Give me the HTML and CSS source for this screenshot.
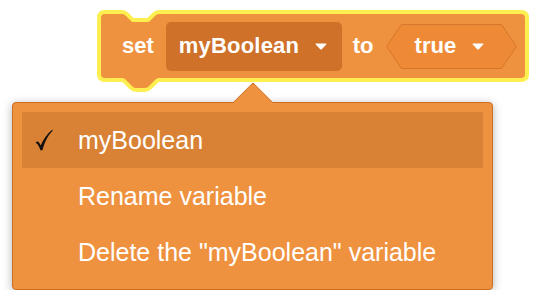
FILE: index.html
```html
<!DOCTYPE html>
<html>
<head>
<meta charset="utf-8">
<link rel="stylesheet" href="styles.css">
</head>
<body>
<div class="page">
  <div class="block">
    <svg class="block-shape" width="424" height="64" viewBox="0 0 424 64">
      <path d="M0 4 Q0 0 4 0 L21 0 C23 0 24 1 25 2 L30 7 C31 8 32 8 34 8 L45 8 C47 8 48 8 49 7 L54 2 C55 1 56 0 58 0 L420 0 Q424 0 424 4 L424 60 Q424 64 420 64 L58 64 C56 64 55 65 54 66 L48 72 C47 73 46 74 44 74 L35 74 C33 74 32 73 31 72 L25 66 C24 65 23 64 21 64 L4 64 Q0 64 0 60 Z" fill="#EF923F" stroke="#FDEF4F" stroke-width="8" stroke-linejoin="round" paint-order="stroke"/>
    </svg>
    <span class="label">set</span>
    <div class="pill">
      <span class="pill-text">myBoolean</span>
      <svg class="caret" width="12" height="7" viewBox="0 0 12 7"><path d="M1.2 0.5 L10.8 0.5 Q12 0.5 11.2 1.5 L6.8 6.2 Q6 7 5.2 6.2 L0.8 1.5 Q0 0.5 1.2 0.5 Z" fill="#fff"/></svg>
    </div>
    <span class="label to">to</span>
    <div class="hex">
      <svg class="hex-shape" width="131" height="45" viewBox="0 0 131 45"><polygon points="0.6,22.5 15.5,0.5 115.5,0.5 130.4,22.5 115.5,44.5 15.5,44.5" fill="#EE8A36" stroke="#D5772B" stroke-width="1"/></svg>
      <span class="hex-text">true</span>
      <svg class="caret" width="14" height="7" viewBox="0 0 12 7"><path d="M1.2 0.5 L10.8 0.5 Q12 0.5 11.2 1.5 L6.8 6.2 Q6 7 5.2 6.2 L0.8 1.5 Q0 0.5 1.2 0.5 Z" fill="#fff"/></svg>
    </div>
  </div>

  <div class="menu">
    <div class="arrow"></div>
    <div class="item selected">
      <span class="check"><svg width="18" height="22" viewBox="0 0 18 22"><path d="M0.8 13.2 C2.6 11.8 4.2 12.8 5.6 16.4 C8.6 9.8 12.6 4.4 17.2 0.8 L17.8 1.6 C13.6 5.8 10.2 11.6 7.4 21.2 L5.4 21.2 C4.4 17.8 3 15 0.8 13.8 Z" fill="#111"/></svg></span>
      <span>myBoolean</span>
    </div>
    <div class="item"><span class="check"></span><span>Rename variable</span></div>
    <div class="item"><span class="check"></span><span>Delete the "myBoolean" variable</span></div>
  </div>
</div>
</body>
</html>
```

FILE: styles.css
```css
html, body {
  margin: 0;
  padding: 0;
  background: #ffffff;
}

.page {
  padding-top: 14px;
  font-family: "Liberation Sans", Arial, sans-serif;
}

.block {
  position: relative;
  margin-left: 101px;
  width: 424px;
  height: 64px;
  box-sizing: border-box;
  padding-left: 21px;
  display: flex;
  align-items: center;
  gap: 12px;
}

.block-shape {
  position: absolute;
  left: 0;
  top: 0;
  overflow: visible;
}

.label {
  position: relative;
  color: #ffffff;
  font-weight: bold;
  font-size: 22px;
}

.label.to {
  margin-left: -1px;
}

.pill {
  position: relative;
  width: 176px;
  height: 49px;
  box-sizing: border-box;
  padding: 0 0 0 13px;
  background: #CF7129;
  border-radius: 5px;
  display: flex;
  align-items: center;
  gap: 16px;
  color: #ffffff;
  font-weight: bold;
  font-size: 22px;
}

.pill-text {
  letter-spacing: 0.2px;
}

.caret {
  display: block;
  margin-top: 1px;
}

.hex {
  position: relative;
  width: 131px;
  height: 45px;
  box-sizing: border-box;
  padding-left: 29px;
  display: flex;
  align-items: center;
  gap: 15px;
  color: #ffffff;
  font-weight: bold;
  font-size: 22px;
}

.hex-shape {
  position: absolute;
  left: 0;
  top: 0;
}

.hex-text {
  position: relative;
}

.hex .caret {
  position: relative;
}

.menu {
  position: relative;
  margin: 24px 0 0 12px;
  width: 481px;
  box-sizing: border-box;
  border: 1px solid #CB6E26;
  border-radius: 4px;
  background: #EF923F;
  padding: 9px;
  box-shadow: 0 2px 10px rgba(0, 0, 0, 0.3);
}

.arrow {
  position: absolute;
  left: 225px;
  top: -15px;
  width: 30px;
  height: 30px;
  box-sizing: border-box;
  background: #EF923F;
  border-top: 1px solid #CB6E26;
  border-left: 1px solid #CB6E26;
  border-top-left-radius: 3px;
  transform: rotate(45deg);
  clip-path: polygon(0 0, 100% 0, 0 100%);
}

.item {
  height: 56px;
  display: flex;
  align-items: center;
  padding-left: 13px;
  color: #ffffff;
  font-size: 25px;
}

.item.selected {
  background: #D98235;
}

.check {
  width: 43px;
  display: flex;
  align-items: center;
}

.check svg {
  display: block;
}
```
